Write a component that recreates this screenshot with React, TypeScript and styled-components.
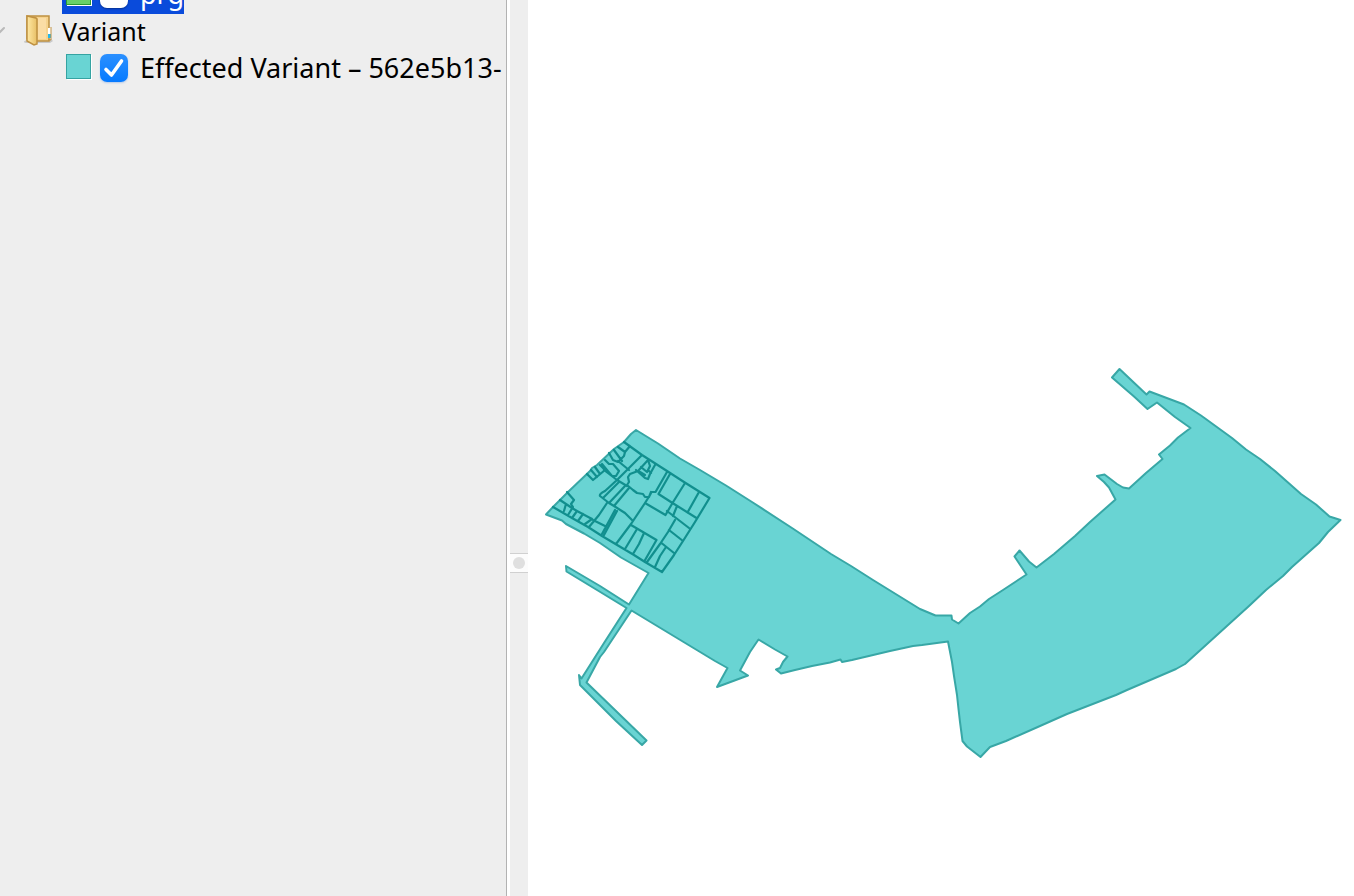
import React, { useState } from "react";
import styled, { createGlobalStyle } from "styled-components";

const GlobalStyle = createGlobalStyle`
  * { box-sizing: border-box; }
  body { margin: 0; background: #ffffff; }
`;

const Window = styled.div`
  display: flex;
  height: 100vh;
  overflow: hidden;
  font-family: "Noto Sans", "Open Sans", sans-serif;
  color: #000000;
`;

const Sidebar = styled.nav`
  flex: 0 0 507px;
  overflow: hidden;
  background: #eeeeee;
  border-right: 1px solid #b2b2b2;
`;

/* The list is scrolled down: its first visible row is cut by the top edge. */
const Tree = styled.ul`
  list-style: none;
  margin: -23px 0 0;
  padding: 0;
`;

const TreeRow = styled.li<{ $depth: number }>`
  display: flex;
  align-items: center;
  height: 37px;
  padding-left: ${(p) => (p.$depth === 0 ? 0 : 62)}px;
  white-space: nowrap;
`;

const LayerLabel = styled.label<{ $selected?: boolean }>`
  display: flex;
  align-items: center;
  height: 37px;
  padding: 0 0 4px 4px;
  font-size: 27px;
  line-height: 36px;
  background: ${(p) => (p.$selected ? "#0a4bdb" : "transparent")};
  color: ${(p) => (p.$selected ? "#ffffff" : "#000000")};
`;

const GroupLabel = styled.span`
  padding-bottom: 4px;
  font-size: 25px;
  line-height: 36px;
`;

const Swatch = styled.span<{ $fill: string; $line: string }>`
  width: 25px;
  height: 25px;
  margin: 0 9px 3px 0;
  background: ${(p) => p.$fill};
  border: 1px solid ${(p) => p.$line};
  box-shadow: 1px 1px 0 #ffffff;
`;

const Tick = styled.span`
  display: grid;
  width: 28px;
  height: 28px;
  margin-right: 12px;

  & > * { grid-area: 1 / 1; }
`;

const TickInput = styled.input`
  appearance: none;
  width: 28px;
  height: 28px;
  margin: 0;
  border-radius: 7px;
  background: #ffffff;
  box-shadow: 0 1px 2px rgba(0, 0, 0, 0.35);

  &:checked {
    background: linear-gradient(#2b90ff, #067aff);
    box-shadow: 0 1px 2px rgba(0, 90, 220, 0.25);
  }
  & + svg { visibility: hidden; pointer-events: none; }
  &:checked + svg { visibility: visible; }
`;

const Toggle = styled.button`
  display: flex;
  width: 24px;
  height: 37px;
  padding: 0;
  border: 0;
  background: none;
`;

const FolderIcon = styled.svg`
  width: 32px;
  height: 37px;
  margin: 0 6px 0 0;
`;

const Divider = styled.div`
  display: flex;
  flex-direction: column;
  flex: 0 0 18px;
  margin-left: 3px;
  background: #eeeeee;

  &::before { content: ""; flex: 553 1 0; }
  &::after { content: ""; flex: 323 1 0; }
`;

const Grip = styled.button`
  display: grid;
  place-items: center;
  height: 20px;
  padding: 0;
  border: solid #d0d0d0;
  border-width: 1px 0;
  background: #fcfcfc;

  &::before {
    content: "";
    width: 12px;
    height: 12px;
    border-radius: 50%;
    background: #dfdfdf;
  }
`;

const MapView = styled.main`
  flex: 1 1 0;
  min-width: 0;
  background: #ffffff;
`;

const MapSvg = styled.svg`
  display: block;
  width: 100%;
  height: 100%;
`;

const AREA =
  "M636 430L658 443.500L680 458.500L700 470L726 485.500L752 502L792 528L831 554L851 566L873 580L920 609L935.500 615.500H951.500L952 619.500L958.500 623.500L970 613L980 606.500L989 599L1003 590L1026.500 574.500L1014.500 556.500L1019.500 550.500L1029 561.500L1036.500 567.500L1054 554L1075 536L1090 522L1107 507L1115.500 499.500L1109 487.500L1104 482L1097 476L1104.500 474.500L1117 484L1123 487.500L1129 488.500L1146 473L1162.500 459L1159 454.500L1170 445.500L1178 437.500L1190.500 428L1175 417L1157 402.500L1147.500 409L1134 396.500L1112 377.500L1119.500 369L1146.500 394.500L1149.500 391.500L1184 404.500L1201 415.500L1232 438L1246 449.500L1260 459L1275 471L1301 494L1316 504.500L1329.500 516.500L1340.500 520L1328 532L1319 543L1292 567L1283 576L1266 590L1249 606L1185 664L1176 669L1127 690L1116 695L1067 714L1040 726L1006 741L990 747L980.500 757L967 746.500L962.500 741L960 722L958.500 709L957 695L954 676L952 662L948 641.500L922 645L913 646L890 651L852 660L842 662L840.500 659.500L830 662.500L812 666L795 670L781 673.500L776 669.500L780 668L783 662L787.500 656.500L775 649.500L758.500 639.500L750 652L740 670.500L748 675.500L717 687L727.500 668L715 661L631.500 610.500L604 652L600 657L586.500 682.500L646.500 740.500L642 745L616 721L580 685L579 675L581.500 678.500L604 643L626.500 608L597 590L566.500 571.500L566 566L600 586L629 604.500L648.500 573L621 557.500L600 543L584 533.500L566 524L562 520.500L546 514.500L553 507L568 492L590 471L592 468L597 465L614 449L624 442L631 434Z";

const PARCELS = [
  "M624 442L642 455L667 471L684 482L709.500 498L695 522L683 541L674 555L662 572L645 562L634 555L602 536L588 527L572 518L553 507",
  "M670 474L658.500 494L672.500 503L696.500 518",
  "M667 472L655.500 492H651.500L650 495L645 503L665.500 515L672.500 503L685 483",
  "M699 492L687.500 512.500",
  "M677 506L673 516M667 511L689 528",
  "M675 520L668 532L660 544L647 562M669 530L683 541M661.500 543L674 553",
  "M666 547L660 556L655 567M631 525L656.500 540L644.500 561",
  "M644 533L639 544L633 554M637 529L625 549",
  "M645 503L631 524L616 544",
  "M642 455L617 480L605 491Q599 494 600 496L609 503L614 506L625 513L632 520",
  "M648 460L638 471L630 474L628 477L629 482L627 485L633 490L637 493L643 494L645 497H649L651 492",
  "M636 470L645 478L648 479L650 474L655 465",
  "M641 467L647 472L650 466L648 460M645 475L640 472M648 470L651 473",
  "M618 447L625 452L630 446M625 452L624 456L618 462L613 460L609 453",
  "M614 450L622 461M618 461L629 470",
  "M602 464L607 470L612 476H616L619 471L613 464H609L605 460",
  "M587 474L593 480L605 470L600 465M591 470L597 477M595 467L600 474",
  "M604 470L617 480L627 486",
  "M603 498L619 482M609 503L625 486M614 506L629 488",
  "M607 503L599 515L589 527M593 520L605 526",
  "M615 510L602 534M617 511L604 535",
  "M567 492L574 500L571 504L573 507L568 515M560 500L572 508L577 511L592 519L593 520",
  "M566 504L564 511M577 511L572 518M583 514L578 521M592 519L585 524",
];

function Check({ checked, label }: { checked: boolean; label: string }) {
  const [on, setOn] = useState(checked);
  return (
    <Tick>
      <TickInput type="checkbox" aria-label={label} checked={on} onChange={() => setOn(!on)} />
      <svg viewBox="0 0 28 28" aria-hidden="true">
        <path d="M6 15.500L11.500 21L21.500 7" fill="none" stroke="#fff" strokeWidth="3.600" strokeLinecap="round" strokeLinejoin="round" />
      </svg>
    </Tick>
  );
}

function Folder() {
  return (
    <FolderIcon viewBox="0 0 32 37" aria-hidden="true">
      <defs>
        <linearGradient id="cover"><stop stopColor="#ffe9a4" /><stop offset="1" stopColor="#e8bf66" /></linearGradient>
      </defs>
      <path d="M-1 28L4 25H27L29 27L26 29H2Z" fill="#c8c8c8" />
      <path d="M3 2H25V27H12L3 25Z" fill="#f6d38e" stroke="#bf9142" strokeWidth="1.500" />
      <path d="M14 4H22V25H14Z" fill="#fbdda5" />
      <path d="M24 14H27V20H24Z" fill="#fff" />
      <path d="M24 20H27V24H24Z" fill="#24b7e8" />
      <path d="M27 13V26H24" fill="none" stroke="#bf9142" />
      <path d="M3 2L12 4L13 5V30L10 31L3 27Z" fill="url(#cover)" stroke="#bf9142" strokeWidth="1.500" />
    </FolderIcon>
  );
}

export default function App() {
  return (
    <Window>
      <GlobalStyle />
      <Sidebar aria-label="Layers">
        <Tree>
          <TreeRow $depth={1}>
            <LayerLabel $selected>
              <Swatch $fill="#68d168" $line="#2b9a32" />
              <Check checked={false} label="prg" />
              prg
            </LayerLabel>
          </TreeRow>
          <TreeRow $depth={0}>
            <Toggle aria-label="Collapse Variant">
              <svg width="8" height="37" viewBox="0 0 8 37" aria-hidden="true">
                <path d="M-4 14L-1 19L4 14" fill="none" stroke="#b9b9b9" strokeWidth="2" strokeLinecap="round" />
              </svg>
            </Toggle>
            <Folder />
            <GroupLabel>Variant</GroupLabel>
          </TreeRow>
          <TreeRow $depth={1}>
            <LayerLabel>
              <Swatch $fill="#69d4d3" $line="#35a3a2" />
              <Check checked label="Effected Variant" />
              Effected Variant – 562e5b13-
            </LayerLabel>
          </TreeRow>
        </Tree>
      </Sidebar>
      <Divider>
        <Grip aria-label="Resize panels" />
      </Divider>
      <MapView>
        <MapSvg viewBox="528 0 826 896" role="img" aria-label="Effected Variant area">
          <path d={AREA} fill="#69d4d3" stroke="#38a7a6" strokeWidth="2" strokeLinejoin="round" />
          <path d={PARCELS.join("")} fill="none" stroke="#118f8e" strokeWidth="2.200" strokeLinejoin="round" strokeLinecap="round" />
        </MapSvg>
      </MapView>
    </Window>
  );
}
